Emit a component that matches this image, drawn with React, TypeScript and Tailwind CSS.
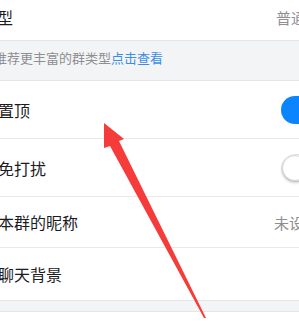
import React from 'react';

const font = { fontFamily: '"Noto Sans CJK SC", "Noto Sans", sans-serif' };

const Toggle: React.FC<{ on: boolean }> = ({ on }) =>
  on ? (
    <div className="relative h-[28px] w-[46px] shrink-0 rounded-full bg-[#0a84ff]">
      <div className="absolute right-[2px] top-[2px] h-[24px] w-[24px] rounded-full bg-white shadow" />
    </div>
  ) : (
    <div className="relative h-[28px] w-[46px] shrink-0 rounded-full border border-[#e3e3e6] bg-white">
      <div className="absolute left-0 top-0 h-[26px] w-[26px] rounded-full border border-[#d6d6d9] bg-white shadow-[0_2px_3px_rgba(0,0,0,0.18)]" />
    </div>
  );

const Row: React.FC<{
  label: string;
  h: string;
  right?: React.ReactNode;
}> = ({ label, h, right }) => (
  <div className={`flex items-center justify-between border-b border-[#e8e8ea] bg-white ${h}`}>
    <span className="ml-[-2px] text-[16px] leading-none text-[#1c1c1e]">{label}</span>
    {right}
  </div>
);

export default function App() {
  return (
    <div className="relative h-[332px] w-[299px] overflow-hidden bg-white" style={font}>
      <div className="flex h-[40px] items-center justify-between bg-white">
        <span className="ml-[-3px] mt-[-6px] text-[16px] leading-none text-[#1c1c1e]">型</span>
        <span className="mr-[-7px] mt-[-6px] whitespace-nowrap text-[15px] leading-none text-[#8e8e93]">普通</span>
      </div>
      <div className="h-[41px] border-y border-[#e6e6e8] bg-[#f3f4f6] pt-[9px]">
        <span className="ml-[-6px] block whitespace-nowrap text-[13px] leading-[15px] text-[#8e8e93]">
          推荐更丰富的群类型<span className="text-[#3b8ee8]">点击查看</span>
        </span>
      </div>
      <Row label="置顶" h="h-[58px]" right={<div className="mr-[-28px]"><Toggle on /></div>} />
      <Row label="免打扰" h="h-[58px]" right={<div className="mr-[-28px]"><Toggle on={false} /></div>} />
      <Row
        label="本群的昵称"
        h="h-[51px]"
        right={<span className="mr-[-5px] whitespace-nowrap text-[15px] leading-none text-[#8e8e93]">未设</span>}
      />
      <Row label="聊天背景" h="h-[52px] border-b-0" />
      <div className="h-[12px] border-y border-[#e6e6e8] bg-[#f3f4f6]" />
      <div className="h-[20px] bg-white" />

      <svg className="pointer-events-none absolute left-0 top-0" width="299" height="332" viewBox="0 0 299 332">
        <polygon
          points="104,123 124,139 119,141 206,318 204,318 110,146 104,148"
          fill="#f63b3b"
        />
      </svg>
    </div>
  );
}
